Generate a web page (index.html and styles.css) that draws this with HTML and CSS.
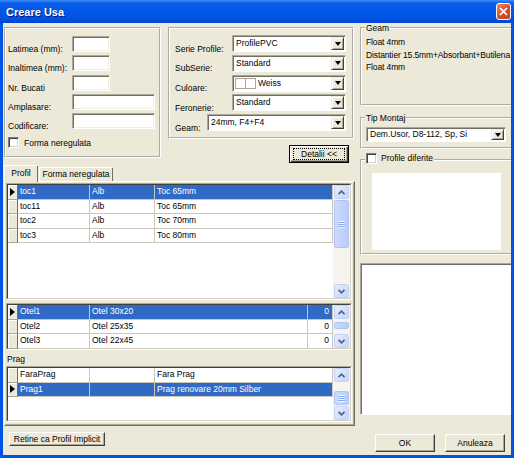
FILE: index.html
```html
<!DOCTYPE html>
<html lang="ro">
<head>
    <meta charset="UTF-8">
    <title>Creare Usa</title>
    <link rel="stylesheet" href="styles.css">
</head>
<body>

<div class="window">
    <div class="titlebar">
        <span class="title">Creare Usa</span>
        <span class="close">
            <svg width="9" height="9" viewBox="0 0 9 9"><path d="M1 1L8 8M8 1L1 8" stroke="#fff" stroke-width="1.7"/></svg>
        </span>
    </div>

    <div class="client">
        <div class="left">
            <div class="top-row">
                <div class="group dims">
                    <div class="field"><label>Latimea (mm):</label><span class="input short"></span></div>
                    <div class="field"><label>Inaltimea (mm):</label><span class="input short"></span></div>
                    <div class="field"><label>Nr. Bucati</label><span class="input short"></span></div>
                    <div class="field"><label>Amplasare:</label><span class="input long"></span></div>
                    <div class="field"><label>Codificare:</label><span class="input long"></span></div>
                    <div class="check-row"><span class="check"></span>Forma neregulata</div>
                </div>

                <div class="opts-col">
                    <div class="group opts">
                        <div class="field">
                            <label>Serie Profile:</label>
                            <span class="combo"><span class="combo-text">ProfilePVC</span><span class="combo-btn"></span></span>
                        </div>
                        <div class="field">
                            <label>SubSerie:</label>
                            <span class="combo"><span class="combo-text">Standard</span><span class="combo-btn"></span></span>
                        </div>
                        <div class="field">
                            <label>Culoare:</label>
                            <span class="combo"><span class="combo-text color"><span class="swatch"></span><span class="swatch"></span>Weiss</span><span class="combo-btn"></span></span>
                        </div>
                        <div class="field">
                            <label>Feronerie:</label>
                            <span class="combo"><span class="combo-text">Standard</span><span class="combo-btn"></span></span>
                        </div>
                        <div class="field geam-field">
                            <label>Geam:</label>
                            <span class="combo wide"><span class="combo-text">24mm, F4+F4</span><span class="combo-btn"></span></span>
                        </div>
                    </div>
                    <button class="btn default detalii"><span>Detalii &lt;&lt;</span></button>
                </div>
            </div>

            <div class="tabs">
                <span class="tab active">Profil</span>
                <span class="tab other">Forma neregulata</span>
            </div>

            <div class="panel">
                <div class="grid g1">
                    <div class="grid-in">
                        <div class="rows">
                            <div class="row sel"><span class="hdr cur"></span><span class="cell c1">toc1</span><span class="cell c2">Alb</span><span class="cell c3">Toc 65mm</span></div>
                            <div class="row"><span class="hdr"></span><span class="cell c1">toc11</span><span class="cell c2">Alb</span><span class="cell c3">Toc 65mm</span></div>
                            <div class="row"><span class="hdr"></span><span class="cell c1">toc2</span><span class="cell c2">Alb</span><span class="cell c3">Toc 70mm</span></div>
                            <div class="row"><span class="hdr"></span><span class="cell c1">toc3</span><span class="cell c2">Alb</span><span class="cell c3">Toc 80mm</span></div>
                        </div>
                        <div class="sb">
                            <span class="sb-btn"><svg width="7" height="5" viewBox="0 0 7 5"><polyline points="0.5,4.2 3.5,1.2 6.5,4.2" fill="none" stroke="#4d6185" stroke-width="1.6"/></svg></span>
                            <span class="sb-track"><span class="sb-thumb big"></span></span>
                            <span class="sb-btn"><svg width="7" height="5" viewBox="0 0 7 5"><polyline points="0.5,0.8 3.5,3.8 6.5,0.8" fill="none" stroke="#4d6185" stroke-width="1.6"/></svg></span>
                        </div>
                    </div>
                </div>

                <div class="grid g2">
                    <div class="grid-in">
                        <div class="rows">
                            <div class="row sel"><span class="hdr cur"></span><span class="cell c1">Otel1</span><span class="cell c2">Otel 30x20</span><span class="cell c3">0</span></div>
                            <div class="row"><span class="hdr"></span><span class="cell c1">Otel2</span><span class="cell c2">Otel 25x35</span><span class="cell c3">0</span></div>
                            <div class="row"><span class="hdr"></span><span class="cell c1">Otel3</span><span class="cell c2">Otel 22x45</span><span class="cell c3">0</span></div>
                        </div>
                        <div class="sb">
                            <span class="sb-btn"><svg width="7" height="5" viewBox="0 0 7 5"><polyline points="0.5,4.2 3.5,1.2 6.5,4.2" fill="none" stroke="#4d6185" stroke-width="1.6"/></svg></span>
                            <span class="sb-track"><span class="sb-thumb small"></span></span>
                            <span class="sb-btn"><svg width="7" height="5" viewBox="0 0 7 5"><polyline points="0.5,0.8 3.5,3.8 6.5,0.8" fill="none" stroke="#4d6185" stroke-width="1.6"/></svg></span>
                        </div>
                    </div>
                </div>

                <div class="prag">Prag</div>

                <div class="grid g3">
                    <div class="grid-in">
                        <div class="rows">
                            <div class="row"><span class="hdr"></span><span class="cell c1">FaraPrag</span><span class="cell c2"></span><span class="cell c3">Fara Prag</span></div>
                            <div class="row sel"><span class="hdr cur"></span><span class="cell c1">Prag1</span><span class="cell c2"></span><span class="cell c3">Prag renovare 20mm Silber</span></div>
                        </div>
                        <div class="sb">
                            <span class="sb-btn"><svg width="7" height="5" viewBox="0 0 7 5"><polyline points="0.5,4.2 3.5,1.2 6.5,4.2" fill="none" stroke="#4d6185" stroke-width="1.6"/></svg></span>
                            <span class="sb-track end"><span class="sb-thumb mid"></span></span>
                            <span class="sb-btn"><svg width="7" height="5" viewBox="0 0 7 5"><polyline points="0.5,0.8 3.5,3.8 6.5,0.8" fill="none" stroke="#4d6185" stroke-width="1.6"/></svg></span>
                        </div>
                    </div>
                </div>
            </div>

            <button class="btn retine">Retine ca Profil Implicit</button>
        </div>

        <div class="right">
            <fieldset class="group geam">
                <legend>Geam</legend>
                <div class="line">Float 4mm</div>
                <div class="line">Distantier 15.5mm+Absorbant+Butilena</div>
                <div class="line">Float 4mm</div>
            </fieldset>

            <fieldset class="group montaj">
                <legend>Tip Montaj</legend>
                <span class="combo montaj-combo"><span class="combo-text">Dem.Usor, D8-112, Sp, Si</span><span class="combo-btn"></span></span>
            </fieldset>

            <fieldset class="group profile-dif">
                <legend><span class="legend-check"><span class="check"></span>Profile diferite</span></legend>
                <div class="white-box"></div>
            </fieldset>

            <div class="blank-panel"></div>

            <div class="actions">
                <button class="btn">OK</button>
                <button class="btn">Anuleaza</button>
            </div>
        </div>
    </div>
</div>

</body>
</html>
```

FILE: styles.css
```css
body {
    margin: 0;
    font-family: "Liberation Sans", Arial, sans-serif;
    font-size: 8.5px;
    color: #000;
    background: #fff;
}

.window {
    width: 514px;
    height: 458px;
    display: flex;
    flex-direction: column;
    background: #0054e3;
}

.titlebar {
    height: 23px;
    flex: none;
    display: flex;
    align-items: center;
    justify-content: space-between;
    padding: 0 3px 0 6px;
    background: linear-gradient(#3d8ef8, #0b5fe9 3px, #0058e6 45%, #0054e3 75%, #0046d6);
}

.title {
    color: #fff;
    font: bold 11px "Liberation Sans", sans-serif;
    text-shadow: 1px 1px #0a1883;
}

.close {
    width: 15px;
    height: 17px;
    box-sizing: border-box;
    border: 1px solid #fff;
    border-radius: 3px;
    background: linear-gradient(135deg, #ea8a6a, #d9532d 50%, #c23d18);
    display: flex;
    align-items: center;
    justify-content: center;
}

.client {
    flex: 1;
    min-height: 0;
    display: flex;
    margin: 0 3px 3px;
    background: #ece9d8;
    overflow: hidden;
}

.left {
    width: 351px;
    flex: none;
    margin-left: 1px;
    padding-top: 4px;
    display: flex;
    flex-direction: column;
}

.right {
    width: 154px;
    flex: none;
    margin-left: 5px;
    display: flex;
    flex-direction: column;
}

/* group boxes */

.group {
    box-sizing: border-box;
    border: 2px groove #fff;
    margin: 0;
    min-width: 0;
}

legend {
    padding: 0 1px;
    margin-left: -1px;
    line-height: 10px;
    background: #ece9d8;
}

.top-row {
    display: flex;
}

.dims {
    width: 157px;
    height: 131px;
    padding: 7px 0 0 2px;
}

.field {
    display: flex;
    align-items: center;
    height: 16px;
    margin-bottom: 3.3px;
}

.field label {
    margin-top: 10px;
    line-height: 12px;
    white-space: nowrap;
}

.dims label {
    width: 64px;
}

.input {
    box-sizing: border-box;
    height: 16px;
    background: #fff;
    border: 1px solid;
    border-color: #aca899 #fff #fff #aca899;
    box-shadow: inset 1px 1px #716f64, inset -1px -1px #f1efe2;
}

.input.short {
    width: 38px;
}

.input.long {
    width: 83px;
}

.check-row {
    display: flex;
    align-items: center;
    gap: 5px;
    height: 11px;
    margin-top: 8px;
    line-height: 12px;
}

.check {
    width: 11px;
    height: 11px;
    flex: none;
    box-sizing: border-box;
    background: #fff;
    border: 1px solid;
    border-color: #808080 #fff #fff #808080;
    box-shadow: inset 1px 1px #404040, inset -1px -1px #d4d0c8;
}

.opts-col {
    width: 186px;
    margin-left: 7px;
    display: flex;
    flex-direction: column;
}

.opts {
    height: 112px;
    padding: 6px 0 0 5px;
}

.opts .field {
    height: 17px;
    margin-bottom: 2.75px;
}

.opts label {
    width: 57px;
}

.opts .geam-field label {
    width: 32px;
}

/* combo boxes */

.combo {
    box-sizing: border-box;
    width: 114px;
    height: 17px;
    display: flex;
    padding: 1px;
    background: #fff;
    border: 1px solid;
    border-color: #aca899 #fff #fff #aca899;
    box-shadow: inset 1px 1px #716f64;
}

.combo.wide {
    width: 139px;
}

.combo-text {
    flex: 1;
    min-width: 0;
    padding-left: 2px;
    line-height: 12px;
    white-space: nowrap;
    overflow: hidden;
}

.combo-text.color {
    display: flex;
    align-items: center;
    padding-left: 1px;
}

.swatch {
    width: 11px;
    height: 11px;
    box-sizing: border-box;
    border: 1px solid #aca899;
    background: #fff;
}

.swatch + .swatch {
    margin-left: -1px;
    margin-right: 2px;
}

.combo-btn {
    width: 13px;
    flex: none;
    box-sizing: border-box;
    background: #ece9d8;
    border: 1px solid;
    border-color: #ece9d8 #404040 #404040 #ece9d8;
    box-shadow: inset 1px 1px #fff, inset -1px -1px #aca899;
    display: flex;
    align-items: center;
    justify-content: center;
}

.combo-btn::after {
    content: "";
    border-top: 4px solid #000;
    border-left: 3.5px solid transparent;
    border-right: 3.5px solid transparent;
}

/* buttons */

.btn {
    box-sizing: border-box;
    width: 60px;
    height: 18px;
    margin: 0;
    padding: 0;
    font: inherit;
    color: #000;
    white-space: nowrap;
    background: #ece9d8;
    border: 1px solid;
    border-color: #fff #404040 #404040 #fff;
    box-shadow: inset -1px -1px #aca899;
    display: flex;
    align-items: center;
    justify-content: center;
}

.btn.default {
    border: 1px solid #000;
    box-shadow: inset 1px 1px #fff, inset -1px -1px #404040, inset -2px -2px #aca899;
}

.btn.default span {
    width: 52px;
    height: 12px;
    box-sizing: border-box;
    border: 1px dotted #000;
    line-height: 10px;
    text-align: center;
}

.detalii {
    align-self: flex-end;
    margin: 6px 5px 0 0;
}

.retine {
    width: 96px;
    height: 14px;
    margin: 6px 0 0 5px;
}

/* tabs */

.tabs {
    display: flex;
    align-items: flex-end;
    height: 16px;
    margin-top: 2px;
}

.tab {
    box-sizing: border-box;
    height: 14px;
    border: 1px solid;
    border-color: #fff #716f64 transparent #fff;
    border-bottom: 0;
    border-radius: 2px 2px 0 0;
    text-align: center;
    line-height: 13px;
    white-space: nowrap;
}

.tab.active {
    width: 34px;
    height: 17px;
    margin-bottom: -1px;
    line-height: 15px;
    background: #ece9d8;
    z-index: 1;
}

.tab.other {
    width: 74px;
    margin-left: 1px;
}

.panel {
    box-sizing: border-box;
    height: 245px;
    padding: 1px 1px 0 1px;
    border: 1px solid;
    border-color: #fff #716f64 #716f64 #fff;
    box-shadow: inset -1px -1px #aca899;
    display: flex;
    flex-direction: column;
}

/* data grids */

.grid {
    flex: none;
    box-sizing: border-box;
    width: 346px;
    border: 1px solid;
    border-color: #aca899 #fff #fff #aca899;
}

.grid-in {
    height: 100%;
    box-sizing: border-box;
    display: flex;
    background: #fff;
    border: 1px solid;
    border-color: #404040 #d4d0c8 #d4d0c8 #404040;
}

.g1 {
    height: 117px;
}

.g2 {
    height: 47px;
    margin-top: 3px;
}

.g3 {
    height: 56px;
}

.prag {
    height: 16px;
    box-sizing: border-box;
    padding: 2px 0 0 1px;
    line-height: 14px;
}

.rows {
    flex: 1;
    min-width: 0;
}

.row {
    display: flex;
    height: 14.5px;
}

.hdr {
    width: 10px;
    flex: none;
    box-sizing: border-box;
    padding-left: 2px;
    background: #ece9d8;
    border-right: 1px solid #716f64;
    border-bottom: 1px solid #aca899;
    box-shadow: inset 1px 1px #fff;
    display: flex;
    align-items: center;
}

.hdr.cur::before {
    content: "";
    border-left: 5px solid #000;
    border-top: 4px solid transparent;
    border-bottom: 4px solid transparent;
}

.cell {
    box-sizing: border-box;
    padding-left: 2px;
    line-height: 13px;
    white-space: nowrap;
    overflow: hidden;
    border-right: 1px solid #cbc8bb;
    border-bottom: 1px solid #cbc8bb;
}

.c1 {
    width: 72px;
}

.c2 {
    width: 65px;
}

.c3 {
    flex: 1;
}

.g2 .c2 {
    width: 218px;
}

.g2 .c3 {
    text-align: right;
    padding-right: 3px;
}

.row.sel .cell {
    background: #316ac5;
    color: #fff;
}

/* scroll bars */

.sb {
    width: 17px;
    flex: none;
    display: flex;
    flex-direction: column;
    background: #f5f4ef;
}

.sb-btn {
    height: 14px;
    flex: none;
    box-sizing: border-box;
    margin: 0 1px;
    border: 1px solid #c3d3f8;
    border-radius: 2px;
    background: linear-gradient(135deg, #e6eefd, #c3d4fb);
    display: flex;
    align-items: center;
    justify-content: center;
}

.sb-track {
    flex: 1;
    display: flex;
    flex-direction: column;
    padding: 1px 0;
}

.sb-track.end {
    justify-content: flex-end;
}

.sb-thumb {
    box-sizing: border-box;
    margin: 0 1px;
    border: 1px solid #b2c5f2;
    border-radius: 2px;
    background: linear-gradient(90deg, #cddbfd, #b8ccfa);
    display: flex;
    align-items: center;
    justify-content: center;
}

.sb-thumb.big {
    height: 48px;
}

.sb-thumb.mid {
    height: 14px;
}

.sb-thumb.small {
    height: 7px;
    margin-top: 2px;
}

.sb-thumb.big::after,
.sb-thumb.mid::after {
    content: "";
    width: 7px;
    height: 7px;
    background: repeating-linear-gradient(#eef3fe 0 1px, #8eabe9 1px 2px);
}

/* right column */

.geam {
    height: 83px;
    padding: 3px 0 0 4px;
}

.line {
    line-height: 12.5px;
    letter-spacing: -0.12px;
    white-space: nowrap;
}

.montaj {
    margin-top: 7px;
    padding: 4px 0 5px 4px;
}

.combo.montaj-combo {
    width: 140px;
    height: 15px;
}

.montaj-combo .combo-text {
    line-height: 11px;
}

.profile-dif {
    margin-top: 4px;
    padding: 7px 0 3px 10px;
}

.profile-dif legend {
    margin-left: -7px;
}

.legend-check {
    display: inline-flex;
    align-items: center;
    gap: 4px;
    line-height: 11px;
}

.white-box {
    width: 129px;
    height: 77px;
    background: #fff;
}

.blank-panel {
    height: 152px;
    flex: none;
    margin-top: 8px;
    box-sizing: border-box;
    background: #fff;
    border: 1px solid;
    border-color: #aca899 #fff #fff #aca899;
    box-shadow: inset 1px 1px #716f64;
}

.actions {
    display: flex;
    gap: 10px;
    margin-top: 19px;
    padding-left: 15px;
}
```
